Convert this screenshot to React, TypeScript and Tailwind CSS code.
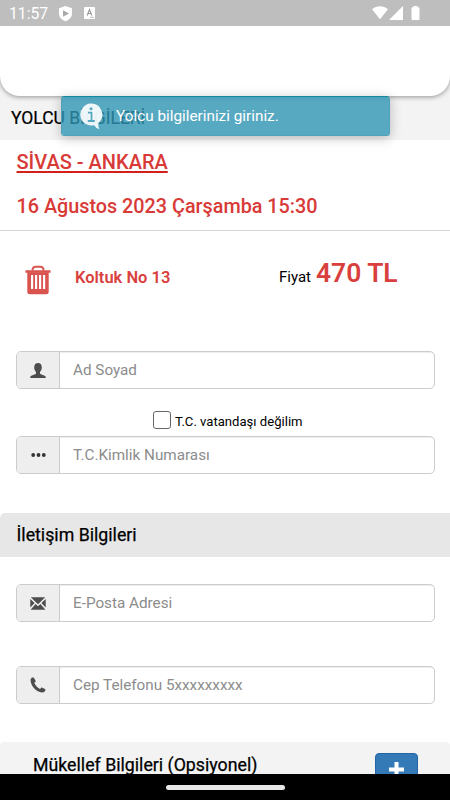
import type { ReactNode } from "react";

function StatusBar() {
  return (
    <div className="relative z-20 flex h-[26px] shrink-0 items-center bg-[#bebebe] pl-[9px] text-white">
      <span className="w-[49px] pt-[2px] text-[15.7px] leading-none">11:57</span>
      <svg className="h-[17px] w-[15px]" viewBox="0 0 15 17">
        <path fill="#fff" d="M7.5 1 14 3.3v5.2c0 3.6-2.6 6.3-6.5 7.8C3.600 14.800 1 12.100 1 8.500V3.300Z" />
        <path fill="#a9a9a9" d="M5 5.300 11 8.500 5 11.700Z" />
      </svg>
      <svg className="ml-[11px] h-[12px] w-[11px]" viewBox="0 0 11 12">
        <rect width="11" height="12" rx="1" fill="#fff" />
        <path d="M3.200 8.500 5.500 2.500 7.800 8.500M4 6.500h3" fill="none" stroke="#999" strokeWidth="1.100" />
        <path d="M6 10.300h4" stroke="#aaa" strokeWidth="0.800" />
      </svg>
      <svg className="ml-auto mr-[30px] h-[16px] w-[49px]" viewBox="0 0 49 16" fill="#fff">
        <path d="M1 4.200C5.500.200 12.500.200 17 4.200L9 14.200Z" />
        <path d="M32 1v14H18Z" />
        <path d="M40.500 2.300h2V1h4v1.300h1.200q.8 0 .8.800v11q0 .9-.8.900h-6.400q-.8 0-.8-.9v-11q0-.8.8-.8Z" />
      </svg>
    </div>
  );
}

function Field({ icon, label }: { icon: ReactNode; label: string }) {
  return (
    <div className="mx-4 flex h-[38px] w-[419px] shrink-0 overflow-hidden rounded-[5px] border border-[#ccc] bg-white">
      <div className="flex w-[43px] shrink-0 items-center justify-center border-r border-[#ccc] bg-[#eee] text-[#4d4d4d]">
        {icon}
      </div>
      <div className="flex flex-1 items-center pl-[13px] pt-[1px] text-[15.25px] text-[#8c8c8c] shadow-[inset_0_1px_1px_rgba(0,0,0,0.075)]">
        <span>{label}</span>
      </div>
    </div>
  );
}

function Toast() {
  return (
    <div className="absolute left-[61px] top-[96px] z-20 flex h-[40px] w-[329px] items-center rounded-[3px] border border-[#50a1b9] border-t-[#108a9c] bg-[#2f96b4]/80 bg-clip-padding shadow-[0_2px_12px_rgba(0,0,0,0.25)]">
      <svg className="ml-[17px] h-[27px] w-[25px] shrink-0" viewBox="0 0 24 27">
        <path fill="#fff" fillOpacity="0.9" d="M11.200 .6a11 11 0 1 0 3.500 21.600q1.500 3 5.300 4-1.800-3-1-6.300A11 11 0 0 0 11.200 .6Z" />
        <circle cx="11.500" cy="5.800" r="1.500" fill="#56a7bf" />
        <path d="M8.500 9.700h3.500v7.800M8.300 18h7" fill="none" stroke="#56a7bf" strokeWidth="1.800" />
      </svg>
      <span className="ml-[12px] whitespace-nowrap text-[15.3px] text-white">Yolcu bilgilerinizi giriniz.</span>
    </div>
  );
}

function Trash() {
  return (
    <svg className="-ml-[0.5px] h-[30px] w-[26px]" viewBox="0 0 26 30" fill="#d9534f">
      <path d="M7.500 5.500V4.500Q8 1.700 10.500 1.700h5Q18 1.700 18.500 4.500v1" fill="none" stroke="#d9534f" strokeWidth="1.900" />
      <path d="M1 5.200h24q.6 0 .6.600v1.400q0 .6-.6.600H1q-.6 0-.6-.6V5.800q0-.6.6-.6Z" />
      <path
        fillRule="evenodd"
        d="M2.300 7.300h21.400v19.400q0 2.500-2.500 2.500H4.800q-2.500 0-2.500-2.500ZM6 10v14h2.200V10Zm4 0v14h2.200V10Zm4 0v14h2.200V10Zm4 0v14h2.200V10Z"
      />
    </svg>
  );
}

const user = (
  <svg className="mt-[1px] h-[16px] w-[16px]" viewBox="0 0 16 16" fill="currentColor">
    <path d="M8 0C5.700 0 4.200 1.600 4.200 4.200c0 1.900.7 3.600 1.800 4.700v1.700C5.500 11.800.5 12.300.3 14v1h15.400v-1c-.2-1.700-5.200-2.200-5.700-3.400V8.900c1.100-1.100 1.800-2.800 1.800-4.700C11.800 1.600 10.300 0 8 0Z" />
  </svg>
);

const dots = (
  <svg className="h-[4px] w-[15px]" viewBox="0 0 15 4" fill="#333">
    <circle cx="2.200" cy="2" r="1.900" />
    <circle cx="7.500" cy="2" r="1.900" />
    <circle cx="12.800" cy="2" r="1.900" />
  </svg>
);

const mail = (
  <svg className="mt-[1px] h-[13px] w-[16px]" viewBox="0 0 16 13" fill="currentColor">
    <path d="M.8.300h14.400L8 7.200ZM.3 2l4.300 4L.3 10.500ZM15.700 2l-4.300 4 4.300 4.500ZM5.600 7 8 9.300 10.400 7l5 5.700H.6Z" />
  </svg>
);

const phone = (
  <svg className="h-[16px] w-[16px]" viewBox="0 0 16 16" fill="currentColor">
    <path d="M2.500.500C1.300.800.500 1.900.600 3.400c.4 5.700 5.700 11.400 11.500 12 1.500.1 2.700-.6 3.200-1.900.3-.7.1-1.200-.4-1.500l-2.600-1.300c-.6-.3-1-.1-1.400.3l-.8 1C7.700 11 5.300 8.400 4.300 5.800l1-.8c.5-.4.5-.8.300-1.300L4 .9C3.700.4 3.200.3 2.500.500Z" />
  </svg>
);

export default function App() {
  return (
    <div className="relative flex h-[800px] w-[450px] flex-col overflow-hidden bg-white font-[Roboto,'Liberation_Sans',sans-serif] text-black">
      <StatusBar />
      <header className="relative shrink-0 bg-[#f3f3f3]">
        <div className="relative z-10 h-[70px] rounded-b-[20px] bg-white shadow-[0_1px_5px_rgba(0,0,0,0.4)]" />
      </header>
      <div className="flex h-[44px] shrink-0 items-center bg-[#f3f3f3] pl-[11px]">
        <h1 className="whitespace-nowrap text-[17.5px] [-webkit-text-stroke:0.2px_#000]">YOLCU BİLGİLERİ</h1>
      </div>
      <Toast />

      <section className="h-[91px] shrink-0 border-b border-[#d5d5d5] pl-[16.5px] text-[20px] font-medium leading-[24px] text-[#d83a37]">
        <p className="pt-[10px] underline decoration-[#d41f1c] decoration-[1.5px] underline-offset-[2px]">SİVAS - ANKARA</p>
        <p className="mt-[21px] text-[19.8px]">16 Ağustos 2023 Çarşamba 15:30</p>
      </section>

      <section className="flex h-[120px] shrink-0 items-start pl-[25px] pt-[34px]">
        <Trash />
        <span className="ml-[24.5px] mt-[2px] w-[204px] text-[16.500px] font-semibold leading-[22px] text-[#d9403d]">Koltuk No 13</span>
        <p className="-mt-[8px] flex items-baseline leading-[32px]">
          <span className="text-[15px]">Fiyat</span>
          <span className="ml-[5px] whitespace-nowrap text-[26.4px] font-semibold text-[#d9403d]">470 TL</span>
        </p>
      </section>

      <Field icon={user} label="Ad Soyad" />
      <label className="ml-[153px] mt-[22px] flex h-[18px] shrink-0 items-center">
        <span className="h-[18px] w-[18px] rounded-[3px] border border-[#666] bg-white" />
        <span className="ml-[4px] pt-[3px] text-[13.1px]">T.C. vatandaşı değilim</span>
      </label>
      <div className="h-[7px] shrink-0" />
      <Field icon={dots} label="T.C.Kimlik Numarası" />

      <div className="mt-[39px] flex h-[44px] shrink-0 items-center rounded-tl-[5px] bg-[#e7e7e7] pl-[16.5px]">
        <h2 className="text-[17.75px] [-webkit-text-stroke:0.25px_#000]">İletişim Bilgileri</h2>
      </div>
      <div className="h-[27px] shrink-0" />
      <Field icon={mail} label="E-Posta Adresi" />
      <div className="h-[44px] shrink-0" />
      <Field icon={phone} label="Cep Telefonu 5xxxxxxxxx" />

      <div className="mt-[38px] flex h-[32px] shrink-0 items-start overflow-hidden rounded-t-[4px] bg-[#f3f3f3] pl-[33px]">
        <h2 className="w-[342px] pt-[10px] text-[17.75px] leading-[26px] [-webkit-text-stroke:0.25px_#000]">Mükellef Bilgileri (Opsiyonel)</h2>
        <div className="mt-[11px] flex h-[36px] w-[43px] justify-center rounded-[4px] border border-[#2466a5] bg-[#337ab7] pt-[8px]">
          <svg className="h-[15px] w-[15px]" viewBox="0 0 15 15">
            <path d="M7.500 0v15M0 7.500h15" stroke="#fff" strokeWidth="4" />
          </svg>
        </div>
      </div>
      <footer className="flex h-[27px] shrink-0 justify-center bg-black pt-[11px]">
        <div className="h-[5px] w-[119px] rounded-full bg-[#e8e8e8]" />
      </footer>
    </div>
  );
}
